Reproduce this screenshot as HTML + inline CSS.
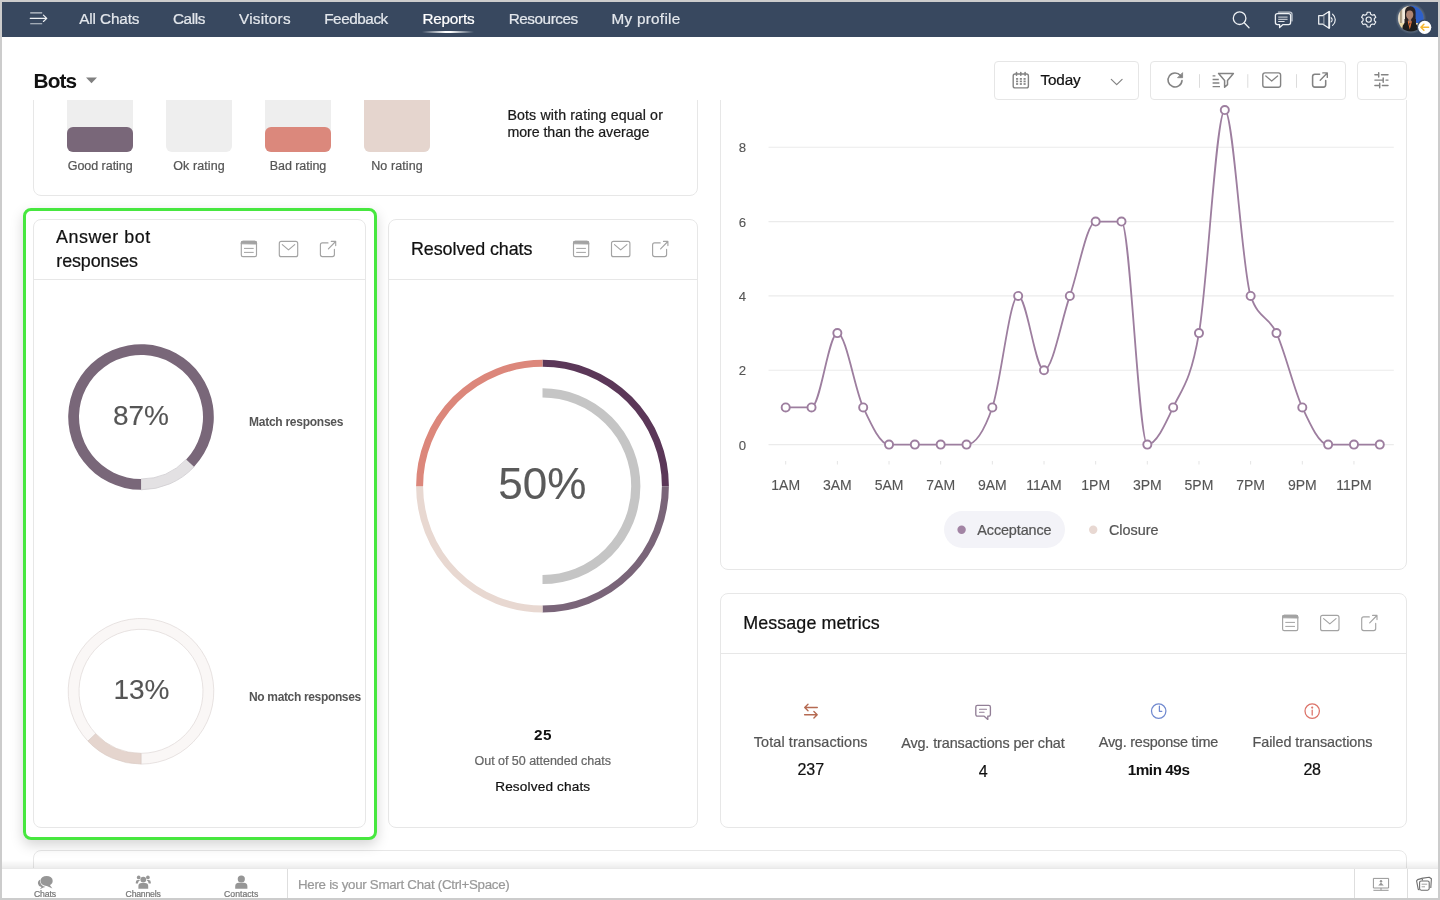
<!DOCTYPE html>
<html lang="en"><head><meta charset="utf-8"><title>Bots - Reports</title>
<style>
*{margin:0;padding:0}
html,body{width:1440px;height:900px;overflow:hidden;background:#fff}
body{position:relative;font-family:"Liberation Sans",sans-serif}
.abs,.t,.card{position:absolute}
.t{white-space:nowrap;display:block;-webkit-text-stroke:0.22px currentColor}
.g{position:absolute;left:0;top:0;width:1440px;height:900px;will-change:transform}
.card{box-sizing:border-box;border:1px solid #e7e7e7;background:#fff}
svg.L{position:absolute;left:0;top:0;overflow:visible}
</style></head>
<body>
<!-- content layer -->
<div class="g">
<div class="card" style="left:33px;top:60px;width:665px;height:136px;border-radius:8px;"></div>
<div class="abs" style="left:67px;top:70px;width:66px;height:82px;background:#EEEEEE;border-radius:6px"></div>
<div class="abs" style="left:67px;top:127px;width:66px;height:25px;background:#796779;border-radius:6px"></div>
<div class="abs" style="left:166px;top:70px;width:66px;height:82px;background:#EEEEEE;border-radius:6px"></div>
<div class="abs" style="left:265px;top:70px;width:66px;height:82px;background:#EEEEEE;border-radius:6px"></div>
<div class="abs" style="left:265px;top:127px;width:66px;height:25px;background:#DB887C;border-radius:6px"></div>
<div class="abs" style="left:364px;top:70px;width:66px;height:82px;background:#EEEEEE;border-radius:6px"></div>
<div class="abs" style="left:364px;top:60px;width:66px;height:92px;background:#E5D5CE;border-radius:6px"></div>
<span class="t" style="left:67.70px;top:157.97px;font-size:12.50px;line-height:16px;color:#555;letter-spacing:-0.032px;">Good rating</span>
<span class="t" style="left:173.25px;top:157.97px;font-size:12.50px;line-height:16px;color:#555;letter-spacing:0.098px;">Ok rating</span>
<span class="t" style="left:269.75px;top:157.97px;font-size:12.50px;line-height:16px;color:#555;letter-spacing:-0.054px;">Bad rating</span>
<span class="t" style="left:371.25px;top:157.97px;font-size:12.50px;line-height:16px;color:#555;letter-spacing:0.097px;">No rating</span>
<span class="t" style="left:507.40px;top:106.28px;font-size:14.20px;line-height:18px;color:#1a1a1a;letter-spacing:0.136px;">Bots with rating equal or</span>
<span class="t" style="left:507.40px;top:123.38px;font-size:14.20px;line-height:18px;color:#1a1a1a;letter-spacing:-0.044px;">more than the average</span>
<div class="card" style="left:33px;top:219px;width:333px;height:609px;border-radius:8px;"></div>
<div class="abs" style="left:34px;top:279px;width:331px;height:1px;background:#e7e7e7"></div>
<span class="t" style="left:56.00px;top:225.99px;font-size:17.90px;line-height:23px;color:#111;letter-spacing:0.528px;">Answer bot</span>
<span class="t" style="left:56.30px;top:249.99px;font-size:17.90px;line-height:23px;color:#111;letter-spacing:-0.098px;">responses</span>
<span class="t" style="left:112.98px;top:397.69px;font-size:28.00px;line-height:36px;color:#555;-webkit-text-stroke:0.12px currentColor;">87%</span>
<span class="t" style="left:249.00px;top:414.34px;font-size:12.00px;line-height:16px;color:#555;font-weight:bold;letter-spacing:-0.260px;-webkit-text-stroke:0;">Match responses</span>
<span class="t" style="left:113.38px;top:672.09px;font-size:28.00px;line-height:36px;color:#555;-webkit-text-stroke:0.12px currentColor;">13%</span>
<span class="t" style="left:249.00px;top:688.74px;font-size:12.00px;line-height:16px;color:#555;font-weight:bold;letter-spacing:-0.343px;-webkit-text-stroke:0;">No match responses</span>
<div class="card" style="left:388px;top:219px;width:310px;height:609px;border-radius:8px;"></div>
<div class="abs" style="left:389px;top:279px;width:308px;height:1px;background:#e7e7e7"></div>
<span class="t" style="left:411.00px;top:237.79px;font-size:17.90px;line-height:23px;color:#111;letter-spacing:-0.068px;">Resolved chats</span>
<span class="t" style="left:498.27px;top:455.25px;font-size:44.00px;line-height:57px;color:#5a5a5a;-webkit-text-stroke:0.12px currentColor;">50%</span>
<span class="t" style="left:533.90px;top:725.30px;font-size:15.30px;line-height:20px;color:#111;font-weight:bold;letter-spacing:0.582px;-webkit-text-stroke:0;">25</span>
<span class="t" style="left:474.50px;top:752.57px;font-size:12.50px;line-height:16px;color:#666;letter-spacing:-0.022px;">Out of 50 attended chats</span>
<span class="t" style="left:495.20px;top:778.38px;font-size:13.60px;line-height:18px;color:#111;letter-spacing:0.155px;">Resolved chats</span>
<div class="card" style="left:720px;top:593px;width:687px;height:235px;border-radius:8px;"></div>
<div class="abs" style="left:721px;top:653px;width:685px;height:1px;background:#e7e7e7"></div>
<span class="t" style="left:743.20px;top:612.29px;font-size:17.90px;line-height:23px;color:#111;letter-spacing:0.094px;">Message metrics</span>
<span class="t" style="left:753.80px;top:732.51px;font-size:14.40px;line-height:19px;color:#555;letter-spacing:0.103px;">Total transactions</span>
<span class="t" style="left:797.40px;top:758.95px;font-size:16.00px;line-height:21px;color:#111;letter-spacing:0.052px;">237</span>
<span class="t" style="left:901.15px;top:733.91px;font-size:14.40px;line-height:19px;color:#555;letter-spacing:-0.101px;">Avg. transactions per chat</span>
<span class="t" style="left:978.85px;top:760.75px;font-size:16.00px;line-height:21px;color:#111;letter-spacing:0.402px;">4</span>
<span class="t" style="left:1098.75px;top:732.51px;font-size:14.40px;line-height:19px;color:#555;letter-spacing:-0.206px;">Avg. response time</span>
<span class="t" style="left:1127.65px;top:759.70px;font-size:15.30px;line-height:20px;color:#111;font-weight:bold;letter-spacing:-0.455px;-webkit-text-stroke:0;">1min 49s</span>
<span class="t" style="left:1252.45px;top:732.51px;font-size:14.40px;line-height:19px;color:#555;letter-spacing:-0.042px;">Failed transactions</span>
<span class="t" style="left:1303.45px;top:758.95px;font-size:16.00px;line-height:21px;color:#111;letter-spacing:-0.297px;">28</span>
<div class="card" style="left:33px;top:850px;width:1374px;height:49px;border-radius:8px;"></div>
<div class="card" style="left:720px;top:60px;width:687px;height:510px;border-radius:8px;"></div>
<span class="t" style="left:738.83px;top:436.52px;font-size:13.20px;line-height:17px;color:#555;-webkit-text-stroke:0.12px currentColor;">0</span>
<span class="t" style="left:738.83px;top:362.18px;font-size:13.20px;line-height:17px;color:#555;-webkit-text-stroke:0.12px currentColor;">2</span>
<span class="t" style="left:738.83px;top:287.84px;font-size:13.20px;line-height:17px;color:#555;-webkit-text-stroke:0.12px currentColor;">4</span>
<span class="t" style="left:738.83px;top:213.50px;font-size:13.20px;line-height:17px;color:#555;-webkit-text-stroke:0.12px currentColor;">6</span>
<span class="t" style="left:738.83px;top:139.16px;font-size:13.20px;line-height:17px;color:#555;-webkit-text-stroke:0.12px currentColor;">8</span>
<span class="t" style="left:771.31px;top:476.15px;font-size:14.00px;line-height:18px;color:#555;-webkit-text-stroke:0.12px currentColor;">1AM</span>
<span class="t" style="left:822.97px;top:476.15px;font-size:14.00px;line-height:18px;color:#555;-webkit-text-stroke:0.12px currentColor;">3AM</span>
<span class="t" style="left:874.63px;top:476.15px;font-size:14.00px;line-height:18px;color:#555;-webkit-text-stroke:0.12px currentColor;">5AM</span>
<span class="t" style="left:926.29px;top:476.15px;font-size:14.00px;line-height:18px;color:#555;-webkit-text-stroke:0.12px currentColor;">7AM</span>
<span class="t" style="left:977.95px;top:476.15px;font-size:14.00px;line-height:18px;color:#555;-webkit-text-stroke:0.12px currentColor;">9AM</span>
<span class="t" style="left:1026.23px;top:476.15px;font-size:14.00px;line-height:18px;color:#555;-webkit-text-stroke:0.12px currentColor;">11AM</span>
<span class="t" style="left:1081.27px;top:476.15px;font-size:14.00px;line-height:18px;color:#555;-webkit-text-stroke:0.12px currentColor;">1PM</span>
<span class="t" style="left:1132.93px;top:476.15px;font-size:14.00px;line-height:18px;color:#555;-webkit-text-stroke:0.12px currentColor;">3PM</span>
<span class="t" style="left:1184.59px;top:476.15px;font-size:14.00px;line-height:18px;color:#555;-webkit-text-stroke:0.12px currentColor;">5PM</span>
<span class="t" style="left:1236.25px;top:476.15px;font-size:14.00px;line-height:18px;color:#555;-webkit-text-stroke:0.12px currentColor;">7PM</span>
<span class="t" style="left:1287.91px;top:476.15px;font-size:14.00px;line-height:18px;color:#555;-webkit-text-stroke:0.12px currentColor;">9PM</span>
<span class="t" style="left:1336.19px;top:476.15px;font-size:14.00px;line-height:18px;color:#555;-webkit-text-stroke:0.12px currentColor;">11PM</span>
<div class="abs" style="left:944px;top:511px;width:121px;height:37px;border-radius:19px;background:#F3F3F8"></div>
<span class="t" style="left:977.30px;top:520.51px;font-size:14.40px;line-height:19px;color:#555;letter-spacing:-0.105px;">Acceptance</span>
<span class="t" style="left:1109.00px;top:520.51px;font-size:14.40px;line-height:19px;color:#555;letter-spacing:-0.020px;">Closure</span>
<svg class="L" width="1440" height="900" viewBox="0 0 1440 900">
<g transform="translate(0.00,0.00)" fill="none" stroke="#a3a3a3" stroke-width="1.15" stroke-linecap="round" stroke-linejoin="round"><rect x="241.3" y="241.4" width="15.2" height="15.3" rx="1.6"/><path d="M241.3,243.6V243a1.6,1.6 0 0 1 1.6,-1.6h12a1.6,1.6 0 0 1 1.6,1.6v.9z" fill="#a3a3a3" stroke="#a3a3a3"/><path d="M244.4,248.4h8.9M244.4,252.4h8.9" stroke-width="1"/><rect x="279.3" y="241.4" width="18.4" height="15.3" rx="2"/><path d="M282.3,244.6L288.5,249.9L294.7,244.6"/><path d="M328,242.9H322.4a2,2 0 0 0 -2,2V254.6a2,2 0 0 0 2,2H332.4a2,2 0 0 0 2,-2V249.4"/><path d="M328.4,248.9L335.6,241.5M331.3,241.4H335.7V245.6"/></g>
<path d="M194.07,466.84A72.8,72.8 0 0 1 141.00,489.80L141.00,479.00A62,62 0 0 0 186.20,459.44Z" fill="#E3E1E3" stroke="#cfcdd0" stroke-width="0.8"/>
<path d="M141.00,489.80A72.8,72.8 0 1 1 194.07,466.84L186.20,459.44A62,62 0 1 0 141.00,479.00Z" fill="#796779"/>
<path d="M87.93,741.14A72.8,72.8 0 1 1 141.01,764.10L141.01,753.30A62,62 0 1 0 95.80,733.74Z" fill="#FAF7F6" stroke="#e2dcda" stroke-width="0.8"/>
<path d="M141.00,764.10A72.8,72.8 0 0 1 87.93,741.14L95.80,733.74A62,62 0 0 0 141.00,753.30Z" fill="#E5D5CE" stroke="#d8c9c3" stroke-width="0.6"/>
<g transform="translate(332.20,0.00)" fill="none" stroke="#a3a3a3" stroke-width="1.15" stroke-linecap="round" stroke-linejoin="round"><rect x="241.3" y="241.4" width="15.2" height="15.3" rx="1.6"/><path d="M241.3,243.6V243a1.6,1.6 0 0 1 1.6,-1.6h12a1.6,1.6 0 0 1 1.6,1.6v.9z" fill="#a3a3a3" stroke="#a3a3a3"/><path d="M244.4,248.4h8.9M244.4,252.4h8.9" stroke-width="1"/><rect x="279.3" y="241.4" width="18.4" height="15.3" rx="2"/><path d="M282.3,244.6L288.5,249.9L294.7,244.6"/><path d="M328,242.9H322.4a2,2 0 0 0 -2,2V254.6a2,2 0 0 0 2,2H332.4a2,2 0 0 0 2,-2V249.4"/><path d="M328.4,248.9L335.6,241.5M331.3,241.4H335.7V245.6"/></g>
<path d="M542.50,363.30A122.9,122.9 0 0 1 665.40,486.20" fill="none" stroke="#5B3758" stroke-width="7"/>
<path d="M665.40,486.20A122.9,122.9 0 0 1 542.50,609.10" fill="none" stroke="#7A6579" stroke-width="7"/>
<path d="M542.50,609.10A122.9,122.9 0 0 1 419.60,486.20" fill="none" stroke="#E8D8D1" stroke-width="7"/>
<path d="M419.60,486.20A122.9,122.9 0 0 1 542.50,363.30" fill="none" stroke="#DC877B" stroke-width="7"/>
<path d="M542.50,392.90A93.3,93.3 0 0 1 542.50,579.50" fill="none" stroke="#C5C5C5" stroke-width="9.2"/>
<g transform="translate(1041.30,374.00)" fill="none" stroke="#a3a3a3" stroke-width="1.15" stroke-linecap="round" stroke-linejoin="round"><rect x="241.3" y="241.4" width="15.2" height="15.3" rx="1.6"/><path d="M241.3,243.6V243a1.6,1.6 0 0 1 1.6,-1.6h12a1.6,1.6 0 0 1 1.6,1.6v.9z" fill="#a3a3a3" stroke="#a3a3a3"/><path d="M244.4,248.4h8.9M244.4,252.4h8.9" stroke-width="1"/><rect x="279.3" y="241.4" width="18.4" height="15.3" rx="2"/><path d="M282.3,244.6L288.5,249.9L294.7,244.6"/><path d="M328,242.9H322.4a2,2 0 0 0 -2,2V254.6a2,2 0 0 0 2,2H332.4a2,2 0 0 0 2,-2V249.4"/><path d="M328.4,248.9L335.6,241.5M331.3,241.4H335.7V245.6"/></g>
<g fill="none" stroke="#B56A52" stroke-width="1.35" stroke-linecap="round" stroke-linejoin="round"><path d="M817.3,707.5H804.8M808,704.2L804.7,707.5L808,710.8"/><path d="M804.6,714.7H817.1M813.9,711.4L817.2,714.7L813.9,718"/></g>
<g fill="none" stroke="#927F97" stroke-width="1.35" stroke-linecap="round" stroke-linejoin="round"><path d="M977.4,705.4h11.4a1.6,1.6 0 0 1 1.6,1.6v7.6a1.6,1.6 0 0 1 -1.6,1.6h-1v3.2l-3.6,-3.2h-6.8a1.6,1.6 0 0 1 -1.6,-1.6v-7.6a1.6,1.6 0 0 1 1.6,-1.6z"/><path d="M979.5,709.3h7M979.5,712.2h4.6" stroke-width="1.1"/></g>
<g fill="none" stroke="#7089CF" stroke-width="1.25" stroke-linecap="round" stroke-linejoin="round"><circle cx="1158.7" cy="711.1" r="7.2"/><path d="M1159.4,706.2V711.3H1161.8"/></g>
<g fill="none" stroke="#DC7268" stroke-width="1.25" stroke-linecap="round"><circle cx="1312.2" cy="711.1" r="7.2"/><path d="M1312.2,710V715"/><circle cx="1312.2" cy="707.6" r="0.45" fill="#DC7268"/></g>
<path d="M768.5,444.60H1393.8" stroke="#ebebeb" stroke-width="1.1" fill="none"/>
<path d="M768.5,370.26H1393.8" stroke="#ebebeb" stroke-width="1.1" fill="none"/>
<path d="M768.5,295.92H1393.8" stroke="#ebebeb" stroke-width="1.1" fill="none"/>
<path d="M768.5,221.58H1393.8" stroke="#ebebeb" stroke-width="1.1" fill="none"/>
<path d="M768.5,147.24H1393.8" stroke="#ebebeb" stroke-width="1.1" fill="none"/>
<path d="M785.70,407.43C794.31,407.43 802.92,407.43 811.53,407.43C820.14,407.43 828.75,333.09 837.36,333.09C845.97,333.09 854.58,388.84 863.19,407.43C871.80,426.01 880.41,444.60 889.02,444.60C897.63,444.60 906.24,444.60 914.85,444.60C923.46,444.60 932.07,444.60 940.68,444.60C949.29,444.60 957.90,444.60 966.51,444.60C975.12,444.60 983.73,432.21 992.34,407.43C1000.95,382.65 1009.56,295.92 1018.17,295.92C1026.78,295.92 1035.39,370.26 1044.00,370.26C1052.61,370.26 1061.22,320.70 1069.83,295.92C1078.44,271.14 1087.05,221.58 1095.66,221.58C1104.27,221.58 1112.88,221.58 1121.49,221.58C1130.10,221.58 1138.71,444.60 1147.32,444.60C1155.93,444.60 1164.54,426.01 1173.15,407.43C1181.76,388.85 1190.37,382.65 1198.98,333.09C1207.59,283.53 1216.20,110.07 1224.81,110.07C1233.42,110.07 1242.03,271.14 1250.64,295.92C1259.25,320.70 1267.86,314.50 1276.47,333.09C1285.08,351.68 1293.69,388.85 1302.30,407.43C1310.91,426.02 1319.52,444.60 1328.13,444.60C1336.74,444.60 1345.35,444.60 1353.96,444.60C1362.57,444.60 1371.18,444.60 1379.79,444.60" fill="none" stroke="#9D7E9F" stroke-width="1.8" stroke-linejoin="round"/>
<circle cx="785.70" cy="407.43" r="4.05" fill="#fff" stroke="#9D7E9F" stroke-width="1.9"/>
<circle cx="811.53" cy="407.43" r="4.05" fill="#fff" stroke="#9D7E9F" stroke-width="1.9"/>
<circle cx="837.36" cy="333.09" r="4.05" fill="#fff" stroke="#9D7E9F" stroke-width="1.9"/>
<circle cx="863.19" cy="407.43" r="4.05" fill="#fff" stroke="#9D7E9F" stroke-width="1.9"/>
<circle cx="889.02" cy="444.60" r="4.05" fill="#fff" stroke="#9D7E9F" stroke-width="1.9"/>
<circle cx="914.85" cy="444.60" r="4.05" fill="#fff" stroke="#9D7E9F" stroke-width="1.9"/>
<circle cx="940.68" cy="444.60" r="4.05" fill="#fff" stroke="#9D7E9F" stroke-width="1.9"/>
<circle cx="966.51" cy="444.60" r="4.05" fill="#fff" stroke="#9D7E9F" stroke-width="1.9"/>
<circle cx="992.34" cy="407.43" r="4.05" fill="#fff" stroke="#9D7E9F" stroke-width="1.9"/>
<circle cx="1018.17" cy="295.92" r="4.05" fill="#fff" stroke="#9D7E9F" stroke-width="1.9"/>
<circle cx="1044.00" cy="370.26" r="4.05" fill="#fff" stroke="#9D7E9F" stroke-width="1.9"/>
<circle cx="1069.83" cy="295.92" r="4.05" fill="#fff" stroke="#9D7E9F" stroke-width="1.9"/>
<circle cx="1095.66" cy="221.58" r="4.05" fill="#fff" stroke="#9D7E9F" stroke-width="1.9"/>
<circle cx="1121.49" cy="221.58" r="4.05" fill="#fff" stroke="#9D7E9F" stroke-width="1.9"/>
<circle cx="1147.32" cy="444.60" r="4.05" fill="#fff" stroke="#9D7E9F" stroke-width="1.9"/>
<circle cx="1173.15" cy="407.43" r="4.05" fill="#fff" stroke="#9D7E9F" stroke-width="1.9"/>
<circle cx="1198.98" cy="333.09" r="4.05" fill="#fff" stroke="#9D7E9F" stroke-width="1.9"/>
<circle cx="1224.81" cy="110.07" r="4.05" fill="#fff" stroke="#9D7E9F" stroke-width="1.9"/>
<circle cx="1250.64" cy="295.92" r="4.05" fill="#fff" stroke="#9D7E9F" stroke-width="1.9"/>
<circle cx="1276.47" cy="333.09" r="4.05" fill="#fff" stroke="#9D7E9F" stroke-width="1.9"/>
<circle cx="1302.30" cy="407.43" r="4.05" fill="#fff" stroke="#9D7E9F" stroke-width="1.9"/>
<circle cx="1328.13" cy="444.60" r="4.05" fill="#fff" stroke="#9D7E9F" stroke-width="1.9"/>
<circle cx="1353.96" cy="444.60" r="4.05" fill="#fff" stroke="#9D7E9F" stroke-width="1.9"/>
<circle cx="1379.79" cy="444.60" r="4.05" fill="#fff" stroke="#9D7E9F" stroke-width="1.9"/>
<path d="M785.70,461V464.5" stroke="#e4e4e4" stroke-width="1" fill="none"/>
<path d="M837.36,461V464.5" stroke="#e4e4e4" stroke-width="1" fill="none"/>
<path d="M889.02,461V464.5" stroke="#e4e4e4" stroke-width="1" fill="none"/>
<path d="M940.68,461V464.5" stroke="#e4e4e4" stroke-width="1" fill="none"/>
<path d="M992.34,461V464.5" stroke="#e4e4e4" stroke-width="1" fill="none"/>
<path d="M1044.00,461V464.5" stroke="#e4e4e4" stroke-width="1" fill="none"/>
<path d="M1095.66,461V464.5" stroke="#e4e4e4" stroke-width="1" fill="none"/>
<path d="M1147.32,461V464.5" stroke="#e4e4e4" stroke-width="1" fill="none"/>
<path d="M1198.98,461V464.5" stroke="#e4e4e4" stroke-width="1" fill="none"/>
<path d="M1250.64,461V464.5" stroke="#e4e4e4" stroke-width="1" fill="none"/>
<path d="M1302.30,461V464.5" stroke="#e4e4e4" stroke-width="1" fill="none"/>
<path d="M1353.96,461V464.5" stroke="#e4e4e4" stroke-width="1" fill="none"/>
<circle cx="961.6" cy="529.8" r="4.2" fill="#A284A4"/>
<circle cx="1093.2" cy="529.8" r="4.2" fill="#E8D8D2"/>
</svg>
<div class="abs" style="left:23px;top:208px;width:354px;height:632px;box-sizing:border-box;border:3px solid #47E73F;border-radius:8px;background:transparent;box-shadow:0 5px 13px rgba(0,0,0,.17)"></div>
</div>
<!-- chrome layer: header, nav bar, bottom bar -->
<div class="g">
<div class="abs" style="left:0;top:37px;width:1440px;height:63px;background:#fff"></div>
<span class="t" style="left:33.60px;top:67.39px;font-size:20.80px;line-height:27px;color:#111;font-weight:bold;letter-spacing:-0.874px;-webkit-text-stroke:0;">Bots</span>
<div class="abs" style="left:994px;top:61px;width:145px;height:39px;box-sizing:border-box;border:1px solid #e6e6e6;border-radius:4px;background:#fff"></div>
<div class="abs" style="left:1150px;top:61px;width:196px;height:39px;box-sizing:border-box;border:1px solid #e6e6e6;border-radius:4px;background:#fff"></div>
<div class="abs" style="left:1357px;top:61px;width:50px;height:39px;box-sizing:border-box;border:1px solid #e6e6e6;border-radius:4px;background:#fff"></div>
<span class="t" style="left:1040.40px;top:70.40px;font-size:15.30px;line-height:20px;color:#111;letter-spacing:-0.132px;">Today</span>
<div class="abs" style="left:0;top:0;width:1440px;height:37px;background:#38485F"></div>
<span class="t" style="left:79.20px;top:8.80px;font-size:15.30px;line-height:20px;color:#E3E7EC;letter-spacing:-0.115px;">All Chats</span>
<span class="t" style="left:173.00px;top:8.80px;font-size:15.30px;line-height:20px;color:#E3E7EC;letter-spacing:-0.427px;">Calls</span>
<span class="t" style="left:239.00px;top:8.80px;font-size:15.30px;line-height:20px;color:#E3E7EC;letter-spacing:0.245px;">Visitors</span>
<span class="t" style="left:324.20px;top:8.80px;font-size:15.30px;line-height:20px;color:#E3E7EC;letter-spacing:-0.442px;">Feedback</span>
<span class="t" style="left:508.70px;top:8.80px;font-size:15.30px;line-height:20px;color:#E3E7EC;letter-spacing:-0.454px;">Resources</span>
<span class="t" style="left:611.40px;top:8.80px;font-size:15.30px;line-height:20px;color:#E3E7EC;letter-spacing:0.287px;">My profile</span>
<span class="t" style="left:422.40px;top:8.80px;font-size:15.30px;line-height:20px;color:#fff;letter-spacing:-0.212px;">Reports</span>
<div class="abs" style="left:422px;top:31px;width:52px;height:2px;background:linear-gradient(90deg,rgba(255,255,255,0),#fff 45%,#fff 55%,rgba(255,255,255,0))"></div>
<div class="abs" style="left:0;top:860px;width:1440px;height:8px;background:linear-gradient(180deg,rgba(0,0,0,0),rgba(0,0,0,.07))"></div>
<div class="abs" style="left:0;top:868px;width:1440px;height:32px;background:#fff;border-top:1px solid #e9e9e9;box-sizing:border-box"></div>
<div class="abs" style="left:287.0px;top:869px;width:1px;height:31px;background:#dedede"></div>
<div class="abs" style="left:1353.9px;top:869px;width:1px;height:31px;background:#dedede"></div>
<div class="abs" style="left:1406.7px;top:869px;width:1px;height:31px;background:#dedede"></div>
<span class="t" style="left:298.00px;top:876.09px;font-size:13.30px;line-height:17px;color:#999;letter-spacing:-0.273px;">Here is your Smart Chat (Ctrl+Space)</span>
<span class="t" style="left:33.95px;top:889.08px;font-size:8.70px;line-height:11px;color:#777;letter-spacing:-0.107px;">Chats</span>
<span class="t" style="left:125.60px;top:889.08px;font-size:8.70px;line-height:11px;color:#777;letter-spacing:-0.223px;">Channels</span>
<span class="t" style="left:224.05px;top:889.08px;font-size:8.70px;line-height:11px;color:#777;">Contacts</span>
<svg class="L" width="1440" height="900" viewBox="0 0 1440 900">
<path d="M86,77.6H97L91.5,83.2Z" fill="#808080"/>
<g fill="none" stroke="#838383" stroke-width="1.4" stroke-linecap="round" stroke-linejoin="round"><rect x="1013.2" y="74" width="15.2" height="13.9" rx="1.9"/><path d="M1016.5,72.5V75.3M1020.8,72.5V75.3M1025.1,72.5V75.3" stroke-width="1.6"/></g><rect x="1016.05" y="78.05" width="2.1" height="1.7" fill="#838383"/><rect x="1019.80" y="78.05" width="2.1" height="1.7" fill="#838383"/><rect x="1023.55" y="78.05" width="2.1" height="1.7" fill="#838383"/><rect x="1016.05" y="80.55" width="2.1" height="1.7" fill="#838383"/><rect x="1019.80" y="80.55" width="2.1" height="1.7" fill="#838383"/><rect x="1023.55" y="80.55" width="2.1" height="1.7" fill="#838383"/><rect x="1016.05" y="83.15" width="2.1" height="1.7" fill="#838383"/><rect x="1019.80" y="83.15" width="2.1" height="1.7" fill="#838383"/><rect x="1023.55" y="83.15" width="2.1" height="1.7" fill="#838383"/>
<path d="M1111.3,79.3L1116.7,84.7L1122.1,79.3" fill="none" stroke="#838383" stroke-width="1.2" stroke-linecap="round" stroke-linejoin="round"/>
<g fill="none" stroke="#838383" stroke-width="1.6" stroke-linecap="round" stroke-linejoin="round"><path d="M1180.5,75.6A7,7 0 1 0 1182,80.6"/><path d="M1182.6,73V77.7H1177.9Z" fill="#838383" stroke-width="0.8"/></g><path d="M1199.5,74.2V87.8" stroke="#dcdcdc" stroke-width="1" fill="none"/><path d="M1247.8,74.2V87.8" stroke="#dcdcdc" stroke-width="1" fill="none"/><path d="M1296.5,74.2V87.8" stroke="#dcdcdc" stroke-width="1" fill="none"/><g fill="none" stroke="#838383" stroke-width="1.25" stroke-linecap="round" stroke-linejoin="round"><path d="M1218.6,73.4H1233.4L1227.5,80.4V84.6L1224.6,87.3V80.4Z" stroke-width="1.5"/><path d="M1212.6,75.9H1215.4M1212.6,79.5H1218.8M1212.6,83H1219.4M1212.6,86.6H1220" stroke-width="1.3" stroke-linecap="butt"/><rect x="1262.8" y="72.9" width="17.8" height="14.4" rx="2.2" stroke-width="1.4"/><path d="M1265.8,76L1271.7,81L1277.6,76"/><path d="M1319.6,74.3H1314.9a2.3,2.3 0 0 0 -2.3,2.3V84.8a2.3,2.3 0 0 0 2.3,2.3H1323.4a2.3,2.3 0 0 0 2.3,-2.3V80.4" stroke-width="1.55"/><path d="M1320.2,80.2L1327,73.2M1322.8,72.9H1327.3V77.4" stroke-width="1.4"/><path d="M1374.9,74.8H1378.7M1378.7,72.6V77M1381.5,74.8H1388" stroke-width="1.45"/><path d="M1374.9,80.1H1383.2M1383.2,77.9V82.3M1386,80.1H1388" stroke-width="1.45"/><path d="M1374.9,85.5H1379.7M1379.7,83.3V87.7M1382.4,85.5H1388" stroke-width="1.45"/></g>
<g fill="none" stroke="#EEF1F4" stroke-width="1.3" stroke-linecap="round" stroke-linejoin="round"><path d="M30.2,12.9H42.2M30.2,23.7H42.2" stroke="#C4CAD2" stroke-width="1.1" stroke-linecap="butt"/><path d="M30.2,18.3H46.4M43.4,15.1L46.8,18.3L43.4,21.5" stroke-width="1.15"/><circle cx="1239.6" cy="18.2" r="6.3"/><path d="M1244.2,22.8L1249,27.7"/><path d="M1278.4,12.1h11.4a2.2,2.2 0 0 1 2.2,2.2v6.6" stroke="#BCC3CC"/><path d="M1277.4,13.6h11.2a2,2 0 0 1 2,2v7a2,2 0 0 1 -2,2h-5.6l-3.4,3v-3h-2.2a2,2 0 0 1 -2,-2v-7a2,2 0 0 1 2,-2z"/><path d="M1278.6,17.1h8.6M1278.6,19.3h8.6M1278.6,21.5h5.6" stroke-width="0.9"/><path d="M1318.7,15.7h3.8l6.6,-4.3v16.8l-6.6,-4.2h-3.8z" stroke-width="1.25"/><path d="M1323.9,15.2V24.6" stroke-width="0.8" stroke="#C4CAD2"/><path d="M1329.3,11.8V27.8" stroke-width="1.7"/><path d="M1331.1,17.7a2.6,2.6 0 0 1 0,4.2" stroke-width="1.1"/><path d="M1332.6,14.2a7.2,7.2 0 0 1 0,11.2" stroke-width="1.15"/></g>
<path d="M1366.75,14.24L1367.20,12.25L1370.20,12.25L1370.65,14.24L1372.36,15.23L1374.32,14.63L1375.81,17.22L1374.31,18.61L1374.31,20.59L1375.81,21.98L1374.32,24.57L1372.36,23.97L1370.65,24.96L1370.20,26.95L1367.20,26.95L1366.75,24.96L1365.04,23.97L1363.08,24.57L1361.59,21.98L1363.09,20.59L1363.09,18.61L1361.59,17.22L1363.08,14.63L1365.04,15.23Z" fill="none" stroke="#EEF1F4" stroke-width="1.15" stroke-linejoin="round"/>
<circle cx="1368.7" cy="19.6" r="2.6" fill="none" stroke="#EEF1F4" stroke-width="1.15"/>
<defs><clipPath id="av"><circle cx="1410.8" cy="18.6" r="12.8"/></clipPath><radialGradient id="glow"><stop offset="0.78" stop-color="#8d9aa8" stop-opacity=".55"/><stop offset="1" stop-color="#8d9aa8" stop-opacity="0"/></radialGradient><filter id="bl" x="-10%" y="-10%" width="120%" height="120%"><feGaussianBlur stdDeviation="0.6"/></filter></defs><circle cx="1410.8" cy="18.6" r="15.5" fill="url(#glow)"/><g clip-path="url(#av)"><g filter="url(#bl)"><rect x="1397" y="5" width="28" height="28" fill="#2F60C9"/><rect x="1397" y="5" width="12.5" height="28" fill="#E4DAC8"/><rect x="1400.2" y="5" width="1.5" height="28" fill="#9b8a70"/><rect x="1403.4" y="5" width="1.1" height="28" fill="#FBF6EA"/><rect x="1397" y="23" width="28" height="10" fill="#E9D9A8"/><path d="M1405,21.5V11Q1405.7,6.2 1410.3,6.2Q1415.4,6.6 1415.6,12V21.5Z" fill="#2a2224"/><rect x="1404.5" y="19" width="11.5" height="6" fill="#2a2224"/><rect x="1408.3" y="18" width="2.9" height="5.6" fill="#A07868"/><ellipse cx="1409.7" cy="14.8" rx="3.6" ry="4.6" fill="#AE8573"/><path d="M1406,10.9Q1409.8,7 1413.6,10.9Q1410.8,9.7 1406,10.9Z" fill="#2a2224"/><path d="M1401.6,33L1402.8,25.4Q1404.5,22.4 1407,21.4L1409.7,23.6L1412.6,21.4Q1415.6,22.4 1417.2,25.4L1418.6,33Z" fill="#1f1b1d"/><path d="M1407.7,21.4L1409.8,29.4L1411.9,21.4L1410.8,21L1409.8,26L1408.8,21Z" fill="#E8743A"/></g></g><circle cx="1424.7" cy="27.3" r="7.9" fill="#38485F"/><circle cx="1424.7" cy="27.3" r="6.6" fill="#fff"/><path d="M1428.6,27.3H1421M1423.9,24.3L1420.9,27.3L1423.9,30.3" fill="none" stroke="#F5B731" stroke-width="1.5" stroke-linecap="round" stroke-linejoin="round"/>
<g fill="#969696"><ellipse cx="46.6" cy="880.9" rx="6.1" ry="5"/><path d="M49.5,884.5L52.4,888.4L45.8,885.6Z"/><path d="M40.3,879.6a4.6,4 0 0 0 1.2,7.4l-1.6,2.2l3.6,-1.7a7,6 0 0 0 2,-0.4a7.4,6.2 0 0 1 -5.2,-7.5z"/><circle cx="143.3" cy="879.6" r="2.9"/><path d="M138.4,888.7v-2.6a3.2,3.2 0 0 1 3.2,-3.2h3.4a3.2,3.2 0 0 1 3.2,3.2v2.6z"/><circle cx="138.7" cy="877.4" r="1.85"/><path d="M135.8,883.6v-1.4a2.1,2.1 0 0 1 2.1,-2.1h2.2a4.4,4.4 0 0 0 -2.2,3.5z"/><circle cx="147.9" cy="877.4" r="1.85"/><path d="M150.8,883.6v-1.4a2.1,2.1 0 0 0 -2.1,-2.1h-2.2a4.4,4.4 0 0 1 2.2,3.5z"/><circle cx="241.3" cy="879" r="3.6"/><path d="M235.2,888.8v-2.4a3.6,3.6 0 0 1 3.6,-3.6h5a3.6,3.6 0 0 1 3.6,3.6v2.4z"/></g><g fill="none" stroke="#969696" stroke-width="1" stroke-linejoin="round"><rect x="1373.4" y="878.4" width="15.2" height="9.6"/><path d="M1373.4,890.3H1388.6M1381,888V890.3"/><circle cx="1381" cy="881.3" r="1.2" fill="#969696" stroke="none"/><path d="M1378.2,885.6L1381,882.4L1383.8,885.6Z" fill="#969696" stroke="none"/><path d="M1417.6,879.6l4.4,-1.2l0.6,2M1421.4,878.4l7.8,-1.2l2.2,1.6l-0.6,9.2M1417.6,879.6l-1,1.2l1.6,8.4l1.2,0.8" stroke="#6e6e6e" stroke-width="1.1"/><rect x="1419.6" y="881" width="9.6" height="9.2" rx="1.6" fill="#fff" stroke="#6e6e6e" stroke-width="1.1"/><path d="M1421.6,884.2h5.6M1421.6,886.8h3.4" stroke-width="0.9"/></g>
</svg>
<div class="abs" style="left:0;top:0;width:1440px;height:900px;box-sizing:border-box;border:2px solid #CCCCCC;pointer-events:none"></div>
</div>
</body></html>
